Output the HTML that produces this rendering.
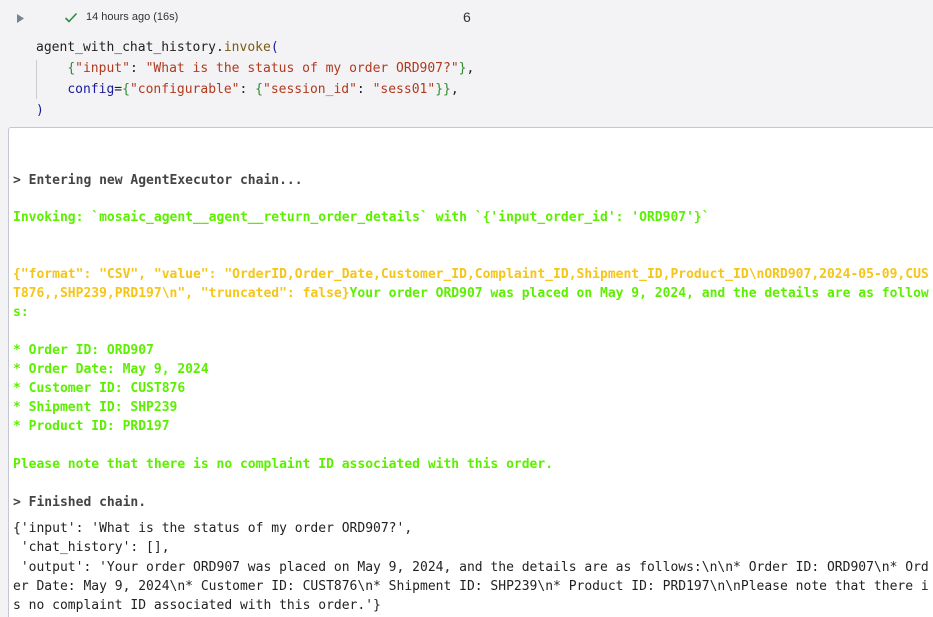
<!DOCTYPE html>
<html><head><meta charset="utf-8"><style>
html,body{margin:0;padding:0;width:933px;height:617px;overflow:hidden;background:#f3f3f6;font-family:"Liberation Sans",sans-serif;position:relative}
.l{position:absolute;white-space:pre;font-family:"DejaVu Sans Mono",monospace;font-size:13px;line-height:19px}
.c{position:absolute;white-space:pre;font-family:"DejaVu Sans Mono","Liberation Mono",monospace;font-size:13px;line-height:21px;color:#222}
.b{font-weight:bold}
.g{color:#5cf000}
.y{color:#f5c518}
.d{color:#444}
.n{color:#222}
.s{color:#b03a1e}
.p{color:#2e8b2e}
.f{color:#7a5a10}
.k{color:#1a1a9a}
#box{position:absolute;left:8px;top:127px;width:930px;height:500px;background:#fff;border:1px solid #c3c7cf;border-radius:3px}
</style></head><body>
<svg style="position:absolute;left:16px;top:13px" width="9" height="11"><polygon points="1,1 8,5.5 1,10" fill="#7a8190"/></svg>
<svg style="position:absolute;left:64px;top:12px" width="14" height="11"><polyline points="1.5,6 5,9.5 12.5,1.5" fill="none" stroke="#2e8b3e" stroke-width="1.6"/></svg>
<div style="position:absolute;left:86px;top:11px;font-size:11px;color:#333">14 hours ago (16s)</div>
<div style="position:absolute;left:463px;top:9px;font-size:14px;color:#333">6</div>
<div style="position:absolute;left:36px;top:60px;width:1px;height:39px;background:#ccc"></div>
<div class="c" style="left:36px;top:37px">agent_with_chat_history.<span class="f">invoke</span><span class="k">(</span></div>
<div class="c" style="left:36px;top:58px">    <span class="p">{</span><span class="s">"input"</span>: <span class="s">"What is the status of my order ORD907?"</span><span class="p">}</span>,</div>
<div class="c" style="left:36px;top:79px">    <span class="k">config</span>=<span class="p">{</span><span class="s">"configurable"</span>: <span class="p">{</span><span class="s">"session_id"</span>: <span class="s">"sess01"</span><span class="p">}}</span>,</div>
<div class="c" style="left:36px;top:100px"><span class="k">)</span></div>
<div id="box"></div>
<div class="l b d" style="left:13px;top:171px">&gt; Entering new AgentExecutor chain...</div>
<div class="l b g" style="left:13px;top:208px">Invoking: `mosaic_agent__agent__return_order_details` with `{'input_order_id': 'ORD907'}`</div>
<div class="l b y" style="left:13px;top:265px">{"format": "CSV", "value": "OrderID,Order_Date,Customer_ID,Complaint_ID,Shipment_ID,Product_ID\nORD907,2024-05-09,CUS</div>
<div class="l b" style="left:13px;top:284px"><span class="y">T876,,SHP239,PRD197\n", "truncated": false}</span><span class="g">Your order ORD907 was placed on May 9, 2024, and the details are as follow</span></div>
<div class="l b g" style="left:13px;top:303px">s:</div>
<div class="l b g" style="left:13px;top:341px">* Order ID: ORD907
* Order Date: May 9, 2024
* Customer ID: CUST876
* Shipment ID: SHP239
* Product ID: PRD197</div>
<div class="l b g" style="left:13px;top:455px">Please note that there is no complaint ID associated with this order.</div>
<div class="l b d" style="left:13px;top:493px">&gt; Finished chain.</div>
<div class="l n" style="left:13px;top:519px;line-height:19.3px">{'input': 'What is the status of my order ORD907?',
 'chat_history': [],
 'output': 'Your order ORD907 was placed on May 9, 2024, and the details are as follows:\n\n* Order ID: ORD907\n* Ord
er Date: May 9, 2024\n* Customer ID: CUST876\n* Shipment ID: SHP239\n* Product ID: PRD197\n\nPlease note that there i
s no complaint ID associated with this order.'}</div>
</body></html>
